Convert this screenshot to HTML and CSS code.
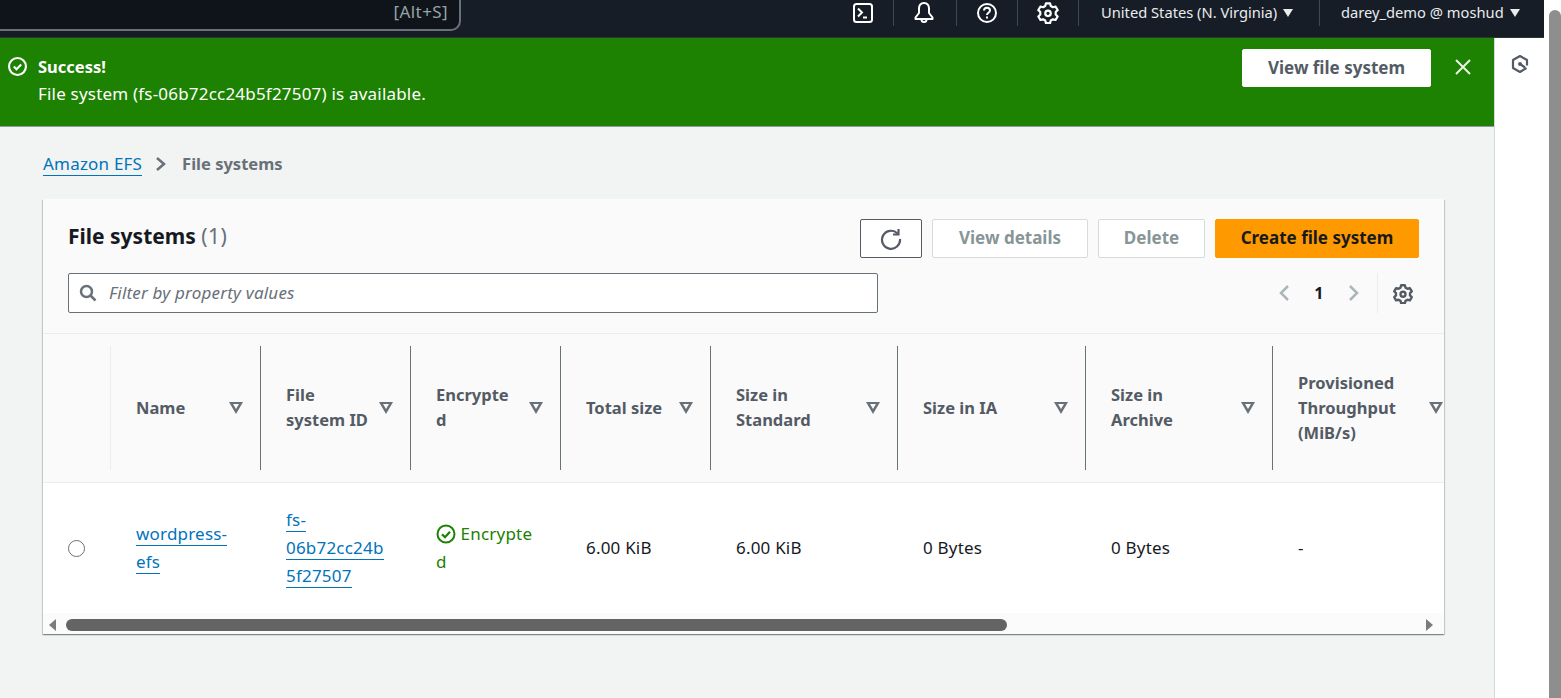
FILE: index.html
```html
<!DOCTYPE html>
<html>
<head>
  <title>File systems | EFS</title>
  <link rel="stylesheet" href="styles.css">
</head>
<body>
  <div class="page">
    <div class="window">
      <header class="topnav">
        <div class="search"><span class="search-key">[Alt+S]</span></div>
        <div class="nav-icon nav-first">
          <svg width="22" height="22" viewBox="0 0 22 22" fill="none" stroke="#fff" stroke-width="2"><rect x="2" y="2" width="18" height="18" rx="2.5"/><path d="M6 6.5l4 4-4 4M11 15.5h4"/></svg>
        </div>
        <div class="nav-icon nav-bell">
          <svg width="22" height="24" viewBox="0 0 22 24" fill="none" stroke="#fff" stroke-width="2" stroke-linejoin="round"><path d="M11 2C7.5 2 6 4.8 6 7.5V12l-3.5 4.5v1.5h17v-1.5L16 12V7.5C16 4.800 14.500 2 11 2z"/><path d="M8.500 18.500a2.500 2.500 0 0 0 5 0"/></svg>
        </div>
        <div class="nav-icon nav-help">
          <svg width="22" height="22" viewBox="0 0 22 22" fill="none" stroke="#fff" stroke-width="2"><circle cx="11" cy="11" r="9"/><path d="M8 8.600c0-1.700 1.300-2.800 3-2.800s3 1.100 3 2.700c0 2.300-3 2.300-3 4.400"/><path d="M11 14.600v2"/></svg>
        </div>
        <div class="nav-icon">
          <svg width="22" height="22" viewBox="0 0 16 16" fill="none" stroke="#fff" stroke-width="1.600" stroke-linejoin="round"><path d="M6.500 1h3l.5 1.900 1.600.9 1.900-.5 1.500 2.600-1.400 1.400v1.800l1.400 1.400-1.500 2.600-1.900-.5-1.600.9-.5 1.900h-3L6 13.500l-1.600-.9-1.900.5L1 10.500l1.400-1.400V7.300L1 5.900l1.500-2.600 1.900.5L6 2.900z"/><circle cx="8" cy="8.200" r="2"/></svg>
        </div>
        <div class="nav-menu nav-region">United States (N. Virginia)<span class="caret"></span></div>
        <div class="nav-menu nav-user">darey_demo @ moshud<span class="caret"></span></div>
      </header>

      <div class="body-row">
        <div class="content">
          <div class="flash">
            <svg class="flash-icon" width="19" height="19" viewBox="0 0 18 18" fill="none" stroke="#fff" stroke-width="2"><circle cx="9" cy="9" r="8"/><path d="M5.500 9l2.500 2.500 4.500-4.500"/></svg>
            <div class="flash-text">
              <div class="flash-title">Success!</div>
              <div>File system (fs-06b72cc24b5f27507) is available.</div>
            </div>
            <button class="flash-btn">View file system</button>
            <svg class="flash-close" width="16" height="16" viewBox="0 0 16 16" fill="none" stroke="#eaf3e6" stroke-width="2"><path d="M1 1l14 14M15 1L1 15"/></svg>
          </div>

          <nav class="crumbs">
            <a class="link crumb-link">Amazon EFS</a>
            <svg width="12" height="16" viewBox="0 0 12 16" fill="none" stroke="#687078" stroke-width="2.500"><path d="M2 2l7 6-7 6"/></svg>
            <span class="crumb-here">File systems</span>
          </nav>

          <section class="card">
            <div class="card-head">
              <div class="head-row">
                <h2 class="title">File systems <span class="count">(1)</span></h2>
                <div class="actions">
                  <button class="btn btn-icon">
                    <svg width="22" height="22" viewBox="0 0 22 22" fill="none" stroke="#545b64" stroke-width="2.200"><path d="M17.500 5.500A9 9 0 1 0 20 11"/><path d="M18.500 1v5.500H13"/></svg>
                  </button>
                  <button class="btn btn-off btn-details">View details</button>
                  <button class="btn btn-off btn-delete">Delete</button>
                  <button class="btn btn-primary">Create file system</button>
                </div>
              </div>
              <div class="head-row tools-row">
                <div class="filter">
                  <svg width="18" height="18" viewBox="0 0 18 18" fill="none" stroke="#687078" stroke-width="2.500"><circle cx="7.500" cy="7.500" r="5.500"/><path d="M11.500 11.500L16.500 16.500"/></svg>
                  <span class="filter-text">Filter by property values</span>
                </div>
                <div class="pager">
                  <svg width="12" height="18" viewBox="0 0 12 18" fill="none" stroke="#aab7b8" stroke-width="2.500"><path d="M10 2L3 9l7 7"/></svg>
                  <span class="page-num">1</span>
                  <svg width="12" height="18" viewBox="0 0 12 18" fill="none" stroke="#aab7b8" stroke-width="2.500"><path d="M2 2l7 7-7 7"/></svg>
                  <div class="pager-gear">
                    <svg width="20" height="20" viewBox="0 0 16 16" fill="none" stroke="#545b64" stroke-width="1.900" stroke-linejoin="round"><path d="M6.500 1h3l.5 1.900 1.600.9 1.900-.5 1.500 2.600-1.400 1.400v1.800l1.400 1.400-1.500 2.600-1.900-.5-1.600.9-.5 1.900h-3L6 13.500l-1.600-.9-1.900.5L1 10.500l1.400-1.400V7.300L1 5.900l1.500-2.600 1.900.5L6 2.900z"/><circle cx="8" cy="8.200" r="2"/></svg>
                  </div>
                </div>
              </div>
            </div>

            <div class="cols table-head">
              <div class="th th-first"></div>
              <div class="th"><span>Name</span><i class="sort"></i></div>
              <div class="th"><span>File<br>system ID</span><i class="sort"></i></div>
              <div class="th"><span>Encrypte<br>d</span><i class="sort"></i></div>
              <div class="th"><span>Total size</span><i class="sort"></i></div>
              <div class="th"><span>Size in<br>Standard</span><i class="sort"></i></div>
              <div class="th"><span>Size in IA</span><i class="sort"></i></div>
              <div class="th"><span>Size in<br>Archive</span><i class="sort"></i></div>
              <div class="th th-last"><span>Provisioned<br>Throughput<br>(MiB/s)</span><i class="sort"></i></div>
            </div>

            <div class="cols table-row">
              <div class="td td-radio"><span class="radio"></span></div>
              <div class="td"><div><a class="link">wordpress-</a><br><a class="link">efs</a></div></div>
              <div class="td"><div><a class="link">fs-</a><br><a class="link">06b72cc24b</a><br><a class="link">5f27507</a></div></div>
              <div class="td td-ok">
                <div>
                  <svg width="20" height="20" viewBox="0 0 20 20" fill="none" stroke="#1d8102" stroke-width="2"><circle cx="10" cy="10" r="8.500"/><path d="M6 10.200l3 3 5-5.500" stroke-width="2.300"/></svg>
                  Encrypte<br>d
                </div>
              </div>
              <div class="td">6.00 KiB</div>
              <div class="td">6.00 KiB</div>
              <div class="td">0 Bytes</div>
              <div class="td">0 Bytes</div>
              <div class="td">-</div>
            </div>

            <div class="hscroll">
              <span class="arrow arrow-left"></span>
              <div class="hscroll-track"><div class="hscroll-thumb"></div></div>
              <span class="arrow arrow-right"></span>
            </div>
          </section>
        </div>

        <aside class="side">
          <svg width="20" height="20" viewBox="0 0 20 20" fill="none" stroke="#545b64" stroke-width="2.200" stroke-linejoin="round"><path d="M16.500 14L10 18l-7-4V6l7-4 7 4v5.500"/><circle cx="10" cy="10" r="2" fill="#545b64" stroke="none"/><path d="M10 10l5 3.500"/></svg>
        </aside>
      </div>
    </div>

    <div class="vscroll"><div class="vscroll-thumb"></div></div>
  </div>
</body>
</html>
```

FILE: styles.css
```css
* {
  box-sizing: border-box;
}

body {
  margin: 0;
  font-family: 'Noto Sans', Roboto, sans-serif;
  font-size: 17px;
  letter-spacing: 0.2px;
  color: #16191f;
  background: #fff;
}

.page {
  display: flex;
  width: 1561px;
  height: 698px;
  overflow: hidden;
}

.window {
  width: 1544px;
  display: flex;
  flex-direction: column;
}

/* top bar */
.topnav {
  height: 38px;
  flex: none;
  display: flex;
  background: #161d26;
  border-bottom: 1px solid #2a3a22;
  color: #e9ebed;
  font-size: 14.7px;
  letter-spacing: 0;
}

.search {
  width: 461px;
  height: 31px;
  margin-right: 372px;
  background: #0f141a;
  border: 1.5px solid #687078;
  border-width: 0 2px 2px 0;
  border-radius: 0 0 10px 0;
  text-align: right;
  padding: 0 11px 0 0;
  color: #95a5a6;
  line-height: 24px;
  font-size: 17px;
  letter-spacing: 0.4px;
  flex: none;
}

.nav-icon {
  width: 61px;
  height: 26px;
  flex: none;
  display: flex;
  align-items: center;
  justify-content: center;
  border-right: 1px solid #414750;
}

.nav-first {
  width: 61px;
}

.nav-bell {
  width: 63px;
}

.nav-bell svg {
  margin-right: 2px;
}

.nav-menu {
  height: 26px;
  flex: none;
  display: flex;
  align-items: center;
  padding-bottom: 2px;
  white-space: nowrap;
}

.nav-region {
  width: 241px;
  padding-left: 22px;
  border-right: 1px solid #414750;
}

.nav-user {
  width: 224px;
  padding-left: 21px;
}

.caret {
  width: 0;
  height: 0;
  margin: 2px 0 0 6px;
  border-left: 5px solid transparent;
  border-right: 5px solid transparent;
  border-top: 8px solid #e9ebed;
}

.body-row {
  flex: 1;
  display: flex;
}

.content {
  width: 1494px;
  background: #f2f3f3;
}

.side {
  width: 50px;
  background: #fff;
  border-left: 1px solid #d5dbdb;
  display: flex;
  justify-content: center;
  padding-top: 16px;
}

/* flash */
.flash {
  height: 89px;
  display: flex;
  align-items: flex-start;
  background: #1d8102;
  border-bottom: 1px solid #8f9ba0;
  color: #fff;
  padding: 11px 0 0 8px;
}

.flash-icon {
  margin: 8px 11px 0 0;
  flex: none;
}

.flash-text {
  flex: 1;
  line-height: 27px;
  padding-top: 4px;
}

.flash-title {
  font-size: 16.5px;
  font-weight: 700;
  letter-spacing: 0;
}

.flash-btn {
  width: 189px;
  height: 38px;
  background: #fff;
  border: 1px solid #fff;
  border-radius: 2px;
  color: #545b64;
  font: 700 17px 'Noto Sans', Roboto, sans-serif;
  padding: 0 0 2px;
}

.flash-close {
  margin: 10px 23px 0 24px;
  flex: none;
}

/* breadcrumbs */
.crumbs {
  height: 72px;
  display: flex;
  align-items: center;
  padding: 2px 0 0 43px;
}

.crumbs svg {
  margin: 0 15px 0 13px;
}

.link {
  color: #0073bb;
  text-decoration: none;
  border-bottom: 1px solid #0073bb;
}

.crumb-here {
  color: #687078;
  font-size: 16.5px;
  font-weight: 700;
  letter-spacing: 0;
  padding-bottom: 2px;
}

/* card */
.card {
  width: 1401px;
  margin-left: 43px;
  height: 435px;
  background: #fff;
  box-shadow: 0 1px 1px 0 rgba(0, 28, 36, 0.3), 1px 1px 1px 0 rgba(0, 28, 36, 0.15), -1px 1px 1px 0 rgba(0, 28, 36, 0.15);
  overflow: hidden;
}

.card-head {
  height: 135px;
  background: #fafafa;
  border-bottom: 1px solid #eaeded;
  padding: 20px 25px 0 25px;
}

.head-row {
  display: flex;
  justify-content: space-between;
  align-items: center;
}

.tools-row {
  margin-top: 15px;
}

.title {
  margin: 0;
  font-size: 21px;
  font-weight: 700;
  letter-spacing: 0;
  line-height: 34px;
  position: relative;
  top: -3px;
}

.count {
  font-weight: 400;
  color: #687078;
  letter-spacing: 0.5px;
}

.actions {
  display: flex;
  gap: 10px;
}

.btn {
  height: 39px;
  border-radius: 2px;
  font: 700 17px 'Noto Sans', Roboto, sans-serif;
  padding: 0 0 2px;
  background: #fff;
}

.btn-icon {
  width: 62px;
  padding: 0;
  border: 1px solid #545b64;
  display: flex;
  align-items: center;
  justify-content: center;
}

.btn-off {
  border: 1px solid #d5dbdb;
  color: #879596;
}

.btn-details {
  width: 156px;
}

.btn-delete {
  width: 107px;
}

.btn-primary {
  width: 204px;
  background: #ff9900;
  border: 1px solid #ff9900;
  color: #16191f;
}

.filter {
  width: 810px;
  height: 40px;
  display: flex;
  align-items: center;
  gap: 12px;
  padding-left: 10px;
  background: #fff;
  border: 1px solid #687078;
  border-radius: 2px;
}

.filter-text {
  font-style: italic;
  color: #687078;
  padding-bottom: 2px;
}

.pager {
  display: flex;
  align-items: center;
  height: 40px;
}

.page-num {
  width: 58px;
  text-align: center;
  font-weight: 700;
  font-size: 16px;
}

.pager-gear {
  height: 40px;
  margin-left: 17px;
  padding: 11px 6px 0 15px;
  border-left: 1px solid #eaeded;
}

/* table */
.cols {
  display: grid;
  grid-template-columns: 68px 150px 150px 150px 150px 187px 188px 187px 171px;
}

.table-head {
  height: 149px;
  background: #fafafa;
  border-bottom: 1px solid #eaeded;
  padding: 12px 0;
}

.th {
  display: flex;
  align-items: center;
  justify-content: space-between;
  padding: 0 17px 2px 25px;
  font-size: 16.5px;
  font-weight: 700;
  letter-spacing: 0;
  color: #545b64;
  line-height: 25px;
  border-right: 1px solid #687078;
  white-space: nowrap;
}

.th-first {
  border-right-color: #eaeded;
}

.th-last {
  border-right: 0;
  width: 187px;
}

.sort {
  width: 0;
  height: 0;
  flex: none;
  margin-top: 2px;
  border-left: 7px solid transparent;
  border-right: 7px solid transparent;
  border-top: 12px solid #687078;
  position: relative;
}

.sort::after {
  content: "";
  position: absolute;
  left: -3px;
  top: -10px;
  border-left: 3px solid transparent;
  border-right: 3px solid transparent;
  border-top: 5px solid #fafafa;
}

.table-row {
  height: 130px;
  align-items: center;
  line-height: 28px;
  background: #fff;
}

.td {
  padding-left: 25px;
  white-space: nowrap;
}

.td-radio {
  padding-left: 25px;
  display: flex;
  align-items: center;
}

.radio {
  width: 17px;
  height: 17px;
  border: 1px solid #687078;
  border-radius: 50%;
  background: #fff;
}

.td-ok {
  color: #1d8102;
}

.td-ok svg {
  vertical-align: -4px;
}

/* table scrollbar */
.hscroll {
  height: 21px;
  display: flex;
  align-items: center;
  background: #fbfbfb;
  padding: 2px 11px 0 6px;
}

.hscroll-track {
  flex: 1;
  padding-left: 10px;
}

.hscroll-thumb {
  width: 941px;
  height: 12px;
  border-radius: 6px;
  background: #646464;
}

.arrow {
  width: 0;
  height: 0;
  border-top: 6px solid transparent;
  border-bottom: 6px solid transparent;
}

.arrow-left {
  border-right: 7px solid #7b7b7b;
}

.arrow-right {
  border-left: 7px solid #7b7b7b;
}

/* window scrollbar */
.vscroll {
  width: 17px;
  background: #fff;
  padding: 10px 0 0 5px;
}

.vscroll-thumb {
  height: 100%;
  background: #8e8e8e;
  border-radius: 6px 6px 0 0;
}
```
